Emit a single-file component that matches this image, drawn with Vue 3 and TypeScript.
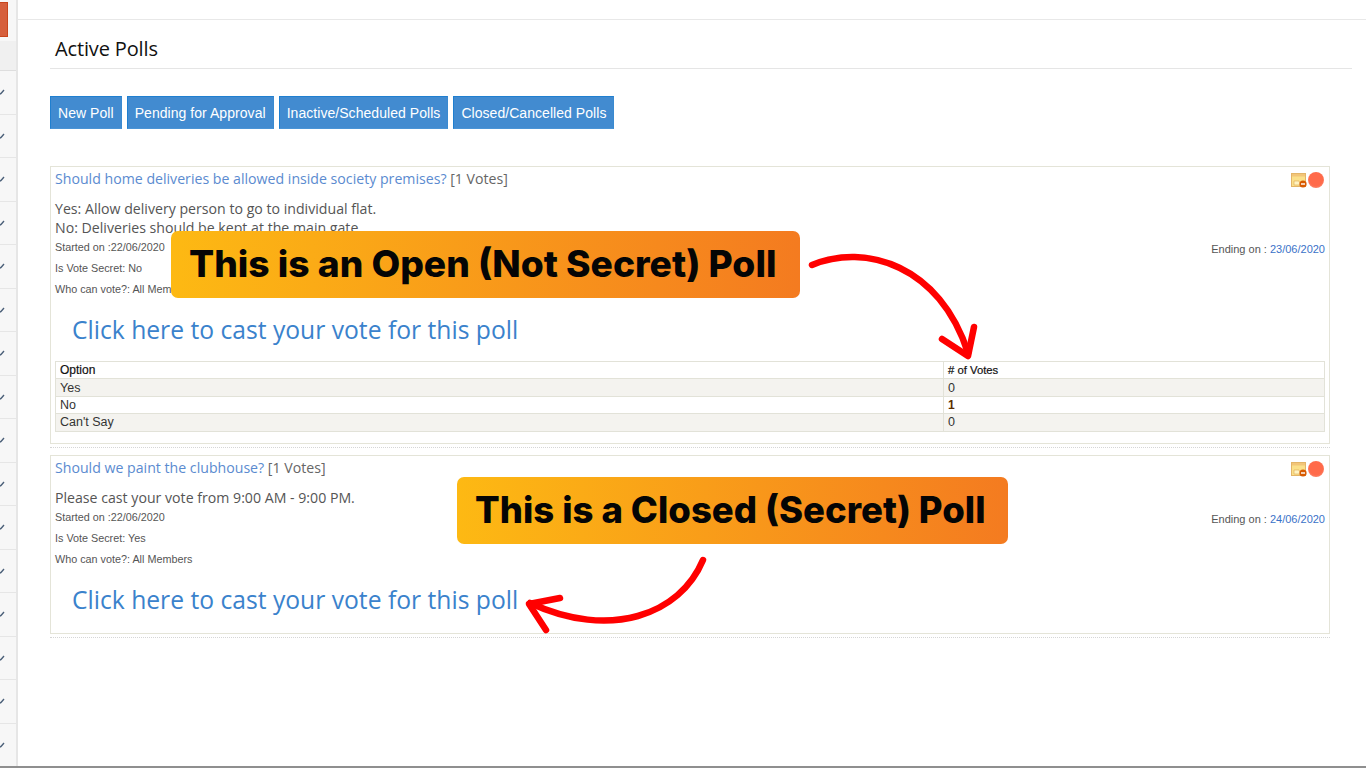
<script setup lang="ts">
interface VoteRow {
  option: string
  votes: number
}

interface Poll {
  id: number
  question: string
  votes: number
  description: string[]
  started: string
  ending: string
  secret: string
  rows: VoteRow[]
}

const sideRows = Array.from({ length: 16 }, (_, i) => i)

const buttons = ['New Poll', 'Pending for Approval', 'Inactive/Scheduled Polls', 'Closed/Cancelled Polls']

const polls: Poll[] = [
  {
    id: 1,
    question: 'Should home deliveries be allowed inside society premises?',
    votes: 1,
    description: ['Yes: Allow delivery person to go to individual flat.', 'No: Deliveries should be kept at the main gate.'],
    started: '22/06/2020',
    ending: '23/06/2020',
    secret: 'No',
    rows: [
      { option: 'Yes', votes: 0 },
      { option: 'No', votes: 1 },
      { option: "Can't Say", votes: 0 }
    ]
  },
  {
    id: 2,
    question: 'Should we paint the clubhouse?',
    votes: 1,
    description: ['Please cast your vote from 9:00 AM - 9:00 PM.'],
    started: '22/06/2020',
    ending: '24/06/2020',
    secret: 'Yes',
    rows: []
  }
]
</script>

<template>
  <div class="page">
    <!-- Left rail, cut off by the screenshot -->
    <aside class="rail">
      <div class="rail-brand"></div>
      <div class="rail-head"></div>
      <div v-for="r in sideRows" :key="r" class="rail-row">
        <svg class="rail-check" width="5" height="8" viewBox="0 0 5 8"><path d="M0 6.2 L1 5.4 L4 2" fill="none" stroke="#4a5f78" stroke-width="1.4" /></svg>
      </div>
    </aside>

    <main class="content">
      <div class="topbar"></div>
      <div class="inner">
        <h2 class="title">Active Polls</h2>
        <div class="actions">
          <button v-for="b in buttons" :key="b" class="btn" type="button">{{ b }}</button>
        </div>

        <div class="polls">
          <section v-for="p in polls" :key="p.id" class="poll-wrap">
            <div class="poll">
              <div class="poll-head">
                <div class="question"><a>{{ p.question }}</a> <span>[{{ p.votes }} Votes]</span></div>
                <div class="poll-icons">
                  <svg width="17" height="16" viewBox="0 0 17 16">
                    <rect x="0.5" y="1.5" width="14" height="13" fill="#fbe08a" stroke="#e3b568" />
                    <rect x="1" y="2" width="13" height="2.5" fill="#f2c578" />
                    <path d="M3 9 L8 9 L10 13 L3 13 Z" fill="#fff3c0" stroke="#dca850" stroke-width="0.6" />
                    <circle cx="12" cy="12" r="3.6" fill="#d85a00" />
                    <rect x="10" y="11.3" width="4" height="1.4" fill="#fff" />
                  </svg>
                  <span class="red-dot"></span>
                </div>
              </div>

              <div class="desc">
                <div v-for="d in p.description" :key="d">{{ d }}</div>
              </div>

              <div class="meta-top">
                <span>Started on :{{ p.started }}</span>
                <span class="ending">Ending on : <a>{{ p.ending }}</a></span>
              </div>
              <div class="meta">Is Vote Secret: {{ p.secret }}</div>
              <div class="meta">Who can vote?: All Members</div>

              <a class="cast">Click here to cast your vote for this poll</a>

              <table v-if="p.rows.length" class="votes">
                <thead>
                  <tr>
                    <th class="col-option">Option</th>
                    <th class="col-votes"># of Votes</th>
                  </tr>
                </thead>
                <tbody>
                  <tr v-for="(row, i) in p.rows" :key="row.option" :class="{ alt: i % 2 === 0 }">
                    <td>{{ row.option }}</td>
                    <td :class="{ top: row.votes > 0 }">{{ row.votes }}</td>
                  </tr>
                </tbody>
              </table>
            </div>
            <div class="dots"></div>
          </section>
        </div>
      </div>
    </main>

    <!-- Annotations laid over the screenshot -->
    <div class="callout callout-open">This is an Open (Not Secret) Poll</div>
    <div class="callout callout-closed">This is a Closed (Secret) Poll</div>

    <svg class="arrows" width="1366" height="768" viewBox="0 0 1366 768">
      <g fill="none" stroke="#ff0000" stroke-width="6.5" stroke-linecap="round" stroke-linejoin="round">
        <path d="M812 265 C 865 243, 940 265, 968 353" />
        <path d="M942 339 L968 356 L974 327" />
        <path d="M703 560 C 680 615, 610 640, 530 603" />
        <path d="M560 598 L529 604 L546 630" />
      </g>
    </svg>
  </div>
</template>

<style>
html,
body {
  margin: 0;
  background: #fff;
}
</style>

<style scoped>
.page {
  position: relative;
  display: flex;
  width: 1366px;
  height: 768px;
  overflow: hidden;
  box-sizing: border-box;
  border-bottom: 2px solid #8f8f8f;
  font-family: "Open Sans", "Liberation Sans", sans-serif;
  background: #fff;
}

.rail {
  flex: 0 0 16px;
  background: #f7f7f7;
  border-right: 2px solid #e6e6e6;
  padding-top: 2px;
  overflow: hidden;
}

.rail-brand {
  width: 8px;
  height: 35px;
  background: #d65f3c;
  box-sizing: border-box;
  border: 1px solid #c8451c;
  border-left: 0;
}

.rail-head {
  height: 29px;
  margin-top: 4px;
  background: #f0f0f0;
  border-bottom: 1px solid #dedede;
}

.rail-row {
  height: 42.5px;
  border-bottom: 1px solid #e6e6e6;
  display: flex;
  align-items: center;
}

.rail-check {
  display: block;
}

.content {
  flex: 1;
  min-width: 0;
}

.topbar {
  height: 19px;
  border-bottom: 1px solid #e8e8e8;
}

.inner {
  padding: 0 14px 0 32px;
}

.title {
  margin: 0;
  height: 49px;
  box-sizing: border-box;
  padding: 17px 0 0 5px;
  border-bottom: 1px solid #e5e5e5;
  font-size: 20px;
  line-height: 24px;
  font-weight: 400;
  color: #111;
  letter-spacing: -0.14px;
}

.actions {
  display: flex;
  gap: 5px;
  margin-top: 27px;
}

.btn {
  height: 33px;
  padding: 0 7px;
  border: 1px solid #1f7fd0;
  border-bottom-color: #4a94d6;
  border-right-color: #3a8ad0;
  border-radius: 0;
  background: #428bd0;
  color: #fff;
  font-family: "Liberation Sans", Arial, sans-serif;
  font-size: 14px;
  letter-spacing: 0.05px;
}

.polls {
  margin-top: 37px;
  width: 1280px;
}

.poll-wrap {
  margin-bottom: 7px;
}

.poll {
  box-sizing: border-box;
  border: 1px solid #e4e4d8;
  padding: 2px 4px 11px;
}

.poll-head {
  display: flex;
  justify-content: space-between;
  align-items: flex-start;
}

.question {
  font-size: 14.15px;
  line-height: 19px;
  color: #666;
}

.question a {
  color: #5b8bd0;
}

.poll-icons {
  display: flex;
  align-items: center;
  margin-top: 1px;
  margin-right: 1px;
  height: 20px;
}

.red-dot {
  width: 16px;
  height: 16px;
  border-radius: 50%;
  background: radial-gradient(circle at 50% 45%, #ff6a4a 0%, #ff6a4a 55%, #f7a08c 100%);
}

.desc {
  margin-top: 9px;
  font-size: 14.15px;
  line-height: 19px;
  color: #555;
}

.meta-top {
  display: flex;
  justify-content: space-between;
  margin-top: 3px;
  font-family: "Liberation Sans", Arial, sans-serif;
  font-size: 10.8px;
  line-height: 14px;
  color: #555;
}

.ending {
  margin-top: 2px;
  font-size: 11px;
}

.ending a {
  color: #3a72c8;
}

.meta {
  margin-top: 7px;
  font-family: "Liberation Sans", Arial, sans-serif;
  font-size: 10.8px;
  line-height: 14px;
  color: #555;
}

.meta-top + .meta {
  margin-top: 5px;
}

.cast {
  display: block;
  margin: 18px 0 6px 17px;
  font-size: 24.66px;
  line-height: 32px;
  color: #3a82cc;
}

.votes {
  width: 100%;
  margin-top: 15px;
  border-collapse: collapse;
  font-family: "Liberation Sans", Arial, sans-serif;
  font-size: 12.5px;
  color: #333;
}

.votes th,
.votes td {
  height: 16.4px;
  padding: 0 4px;
  border: 1px solid #e2e2d8;
  text-align: left;
  line-height: 14px;
}

.votes th {
  font-size: 12px;
  font-weight: 400;
  color: #111;
  -webkit-text-stroke: 0.2px #111;
}

.votes th.col-votes {
  font-size: 11.3px;
}

.col-option {
  width: 879px;
}

.votes tr.alt td {
  background: #f4f3ef;
}

.votes td.top {
  font-size: 12px;
  font-weight: 700;
  color: #5a2d00;
}

.dots {
  margin-top: 3px;
  border-top: 1px dotted #d6d6d6;
  height: 0;
}

.callout {
  position: absolute;
  display: flex;
  align-items: center;
  box-sizing: border-box;
  height: 67px;
  padding: 0 0 2px 18px;
  border-radius: 7px;
  background: linear-gradient(90deg, #fdb913 0%, #f47b20 100%);
  color: #050505;
  font-family: Inter, "Liberation Sans", sans-serif;
  font-weight: 800;
  white-space: nowrap;
}

.callout-open {
  left: 171px;
  top: 231px;
  width: 629px;
  font-size: 37.2px;
}

.callout-closed {
  left: 457px;
  top: 477px;
  width: 551px;
  font-size: 36.5px;
}

.arrows {
  position: absolute;
  left: 0;
  top: 0;
  pointer-events: none;
}
</style>
